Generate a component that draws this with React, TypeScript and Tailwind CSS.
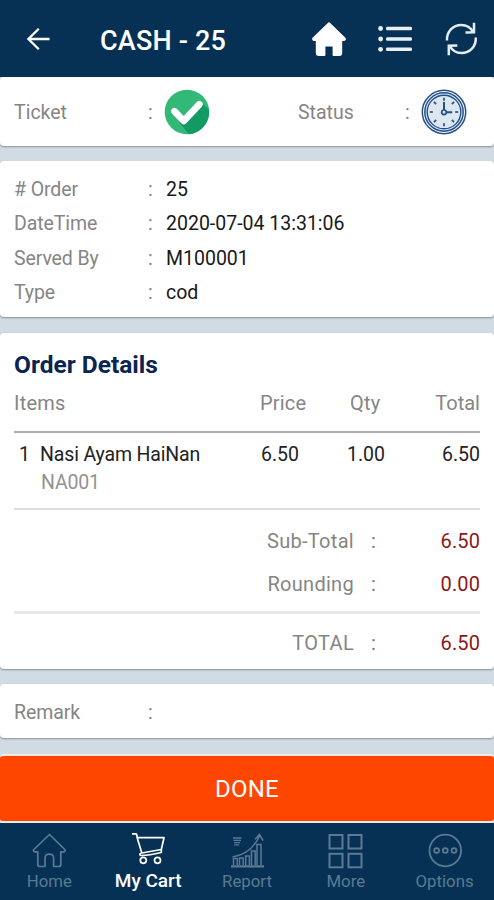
import { ReactNode } from "react";
import clsx from "clsx";

interface OrderField {
  label: string;
  value: string;
}

interface NavItem {
  label: string;
  icon: ReactNode;
  active?: boolean;
}

const fields: OrderField[] = [
  { label: "# Order", value: "25" },
  { label: "DateTime", value: "2020-07-04 13:31:06" },
  { label: "Served By", value: "M100001" },
  { label: "Type", value: "cod" },
];

const clockTicks = [0, 45, 90, 135, 180, 225, 270, 315];

function BackIcon() {
  return (
    <svg viewBox="0 0 24 24" className="h-6 w-6" fill="none" stroke="#fff" strokeWidth="2.3">
      <path d="M23.5 12H2.500M12.800 1.800 2.400 12l10.400 10.200" />
    </svg>
  );
}

function HomeSolidIcon() {
  return (
    <svg viewBox="0 0 34 34" className="h-[34px] w-[34px]" fill="#fff" stroke="#fff" strokeLinejoin="round" strokeWidth="2">
      <path d="M17 1.2 1.3 16.4c-.4.8 0 1.5.8 1.5h2.700V31c0 1.300.6 2 2 2h5.600v-8.200c0-1 .4-1.400 1.400-1.400h6.400c1 0 1.400.4 1.400 1.400V33h5.600c1.400 0 2-.7 2-2V17.900h2.700c.8 0 1.200-.7.8-1.500Z" />
    </svg>
  );
}

function ListIcon() {
  return (
    <svg viewBox="0 0 34 28" className="h-7 w-[34px]" fill="#e9f0f5">
      {[3.5, 14, 24.3].map((y) => (
        <g key={y}>
          <circle cx="2.600" cy={y} r="2.400" />
          <rect x="8" y={y - 1.8} width="26" height="3.600" rx="1.400" />
        </g>
      ))}
    </svg>
  );
}

function RefreshIcon() {
  return (
    <svg viewBox="0 0 34 36" className="h-9 w-[34px]" fill="none" stroke="#e4edf3" strokeWidth="2.500">
      <path d="M3 19.500C2.500 10.500 9 4 17.300 4c4.800 0 9.300 2.500 11.700 7M30 1.800v9.500l-8.500.3" />
      <path d="M31.800 16.500C32.300 25.500 25.800 32 17.500 32c-4.800 0-9.300-2.500-11.700-7M4.800 34.200v-9.500l8.500-.3" />
    </svg>
  );
}

function CheckIcon() {
  return (
    <svg viewBox="0 0 46 46" className="h-[46px] w-[46px]">
      <circle cx="23" cy="23" r="22.300" fill="#32b877" />
      <path d="M15 33.500 20 35 37 13l8 8A22.300 22.300 0 0 1 25 45.200Z" fill="#119b62" />
      <path d="m10.500 22.300 9.300 9.500 15.500-16.500" fill="none" stroke="#fff" strokeWidth="6.800" strokeLinecap="round" strokeLinejoin="round" />
    </svg>
  );
}

function ClockIcon() {
  return (
    <svg viewBox="0 0 46 46" className="h-[46px] w-[46px]" fill="none" stroke="#24508c">
      <circle cx="23" cy="23" r="21.700" fill="#fff" strokeWidth="1.500" />
      <circle cx="23" cy="23" r="19.200" fill="#dbe5f0" strokeWidth="1.500" />
      <circle cx="23" cy="23" r="16.800" fill="#dde7ef" strokeWidth="1.400" />
      {clockTicks.map((angle) => (
        <path key={angle} d="M23 8.800v3" strokeWidth="1.700" transform={`rotate(${angle} 23 23)`} />
      ))}
      <path d="M23 13v8M25.200 23.300h6" strokeWidth="2" />
      <circle cx="23" cy="23.300" r="2.300" strokeWidth="1.700" />
    </svg>
  );
}

function HomeIcon() {
  return (
    <svg viewBox="0 0 36 36" className="h-9 w-9" fill="none" stroke="currentColor" strokeWidth="1.700" strokeLinejoin="round">
      <path d="M18.500 1.500 2.800 16.500c-.8 1-.2 2.300 1 2.300h3V31.500c0 1.300.7 2 2 2h5.200v-8.300c0-3.200 1-4 4.300-4s4.300.8 4.300 4v8.300h5.200c1.300 0 2-.7 2-2V18.800h3c1.200 0 1.800-1.300 1-2.300Z" />
    </svg>
  );
}

function CartIcon() {
  return (
    <svg viewBox="0 0 36 36" className="h-9 w-9" fill="none" stroke="currentColor" strokeWidth="1.700" strokeLinejoin="round">
      <path d="M2 .9h4.300l1.400 3.800h26.300L31.300 16.500 11.800 20 6.800 3.500M11.800 20c-3 .7-2.300 2.500 0 2.500C18 22.500 25 21 31.300 19.500v-3" />
      <circle cx="13.300" cy="27.300" r="3" />
      <circle cx="27.500" cy="27.300" r="3" />
    </svg>
  );
}

function ReportIcon() {
  return (
    <svg viewBox="0 0 34 36" className="h-9 w-[34px]" fill="none" stroke="currentColor" strokeWidth="1.500">
      <path d="M3.500 32V25.500h3.700V32M9.500 32v-7h3.700V32M15.700 32v-9h3.700v9M21.500 32V18h3.700v14M27 32V11.500h4V32" />
      <path d="M1 33.300h33" strokeWidth="2.200" />
      <path d="M2.500 24C15 22 24 15 29.500 3M25 6.300l4.500-4.800 3.500 6" strokeWidth="1.500" />
      <path d="M3 5h8.300M3.500 7.300h7.500M4 9.600h6M4 11.800h5" strokeWidth="1.300" />
    </svg>
  );
}

function MoreIcon() {
  return (
    <svg viewBox="0 0 35 35" className="h-[35px] w-[35px]" fill="none" stroke="currentColor" strokeWidth="2">
      <rect x="1.500" y="1" width="13" height="13.500" />
      <rect x="20.500" y="1" width="13" height="13.500" />
      <rect x="1.500" y="19.800" width="13" height="13.500" />
      <rect x="20.500" y="19.800" width="13" height="13.500" />
    </svg>
  );
}

function OptionsIcon() {
  return (
    <svg viewBox="0 0 36 36" className="h-9 w-9" fill="none" stroke="currentColor" strokeWidth="1.800">
      <circle cx="18.300" cy="17.500" r="15.800" />
      <circle cx="9.600" cy="17.500" r="2.400" />
      <circle cx="18.300" cy="17.500" r="2.400" />
      <circle cx="27" cy="17.500" r="2.400" />
    </svg>
  );
}

const navItems: NavItem[] = [
  { label: "Home", icon: <HomeIcon /> },
  { label: "My Cart", icon: <CartIcon />, active: true },
  { label: "Report", icon: <ReportIcon /> },
  { label: "More", icon: <MoreIcon /> },
  { label: "Options", icon: <OptionsIcon /> },
];

function Card({ className, children }: { className?: string; children: ReactNode }) {
  return (
    <section className={clsx("rounded-[4px] bg-white px-[14px] shadow-[0_1px_2px_rgba(0,0,0,0.35)]", className)}>
      {children}
    </section>
  );
}

function SummaryRow({ label, value, className }: { label: string; value: string; className?: string }) {
  return (
    <div className={clsx("flex items-center text-[20px] leading-[24px]", className)}>
      <span className="w-[340px] text-right tracking-[0.3px] text-[#858585]">{label}</span>
      <span className="ml-[17px] text-[#777]">:</span>
      <span className="flex-1 text-right tracking-[0.100px] text-[#8f1518]">{value}</span>
    </div>
  );
}

export default function App() {
  return (
    <div className="flex h-[900px] w-[494px] flex-col bg-[#d1dbe4] font-[Roboto,sans-serif] text-[19.500px] leading-[24px] text-[#858585]">
      {/* Header */}
      <header className="flex h-[77px] shrink-0 items-center bg-[#063154] pl-[26px] pr-4">
        <BackIcon />
        <h1 className="ml-[50px] mt-1 text-[27px] font-medium tracking-[0.200px] text-white">CASH - 25</h1>
        <div className="ml-auto flex items-center">
          <HomeSolidIcon />
          <span className="ml-8">
            <ListIcon />
          </span>
          <span className="ml-8">
            <RefreshIcon />
          </span>
        </div>
      </header>

      <main className="flex flex-1 flex-col">
        {/* Ticket and status */}
        <Card className="flex h-[69px] items-center">
          <span className="mt-0.5 w-[134px]">Ticket</span>
          <span className="mt-0.5 w-4">:</span>
          <CheckIcon />
          <span className="ml-[88px] mt-0.5 w-[107px]">Status</span>
          <span className="mt-0.5 w-4">:</span>
          <ClockIcon />
        </Card>

        {/* Order information */}
        <Card className="mt-[15px] h-[156px] pt-3">
          {fields.map((field) => (
            <div key={field.label} className="flex h-[34.300px] items-center">
              <span className="w-[134px] tracking-[-0.100px]">{field.label}</span>
              <span className="w-[18px]">:</span>
              <span className="text-[#181818]">{field.value}</span>
            </div>
          ))}
        </Card>

        {/* Order details */}
        <Card className="mt-4 h-[336px] pt-[18px]">
          <h2 className="text-[24.500px] font-bold leading-[28px] text-[#0b2452]">Order Details</h2>
          <div className="mt-3 flex border-b-2 border-[#adadad] pb-4 text-[20px]">
            <span className="flex-1 tracking-[0.200px]">Items</span>
            <span className="w-[70px] tracking-[0.200px]">Price</span>
            <span className="w-[70px] pl-[20px] tracking-[0.200px]">Qty</span>
            <span className="w-[80px] text-right">Total</span>
          </div>
          <div className="flex border-b-2 border-[#ddd] pb-[13px] pt-[10px] text-[#222]">
            <span className="w-[26px] pl-[5px]">1</span>
            <div className="flex-1">
              <p className="tracking-[-0.150px]">Nasi Ayam HaiNan</p>
              <p className="mt-1 pl-[1px] tracking-[-0.200px] text-[#929292]">NA001</p>
            </div>
            <span className="w-[69px]">6.50</span>
            <span className="w-[70px] pl-[17px]">1.00</span>
            <span className="w-[80px] text-right">6.50</span>
          </div>
          <div className="border-b-[3px] border-[#e7e7e7] pb-[15px] pt-[19px]">
            <SummaryRow label="Sub-Total" value="6.50" />
            <SummaryRow label="Rounding" value="0.00" className="mt-[19px]" />
          </div>
          <SummaryRow label="TOTAL" value="6.50" className="mt-[17px]" />
        </Card>

        {/* Remark */}
        <Card className="mt-[15px] flex h-[54px] items-center pt-1">
          <span className="w-[134px] tracking-[-0.100px]">Remark</span>
          <span>:</span>
        </Card>

        <button className="mt-4 h-[69px] w-full rounded-[4px] border-y-2 border-[#f5e9e6] bg-[#ff4600] text-[24px] tracking-[0.200px] text-white">
          DONE
        </button>
      </main>

      {/* Bottom navigation */}
      <nav className="flex h-[77px] shrink-0 bg-[#063154]">
        {navItems.map((item) => (
          <a
            key={item.label}
            className={clsx(
              "flex flex-1 flex-col items-center pt-[10px]",
              item.active ? "text-white" : "text-[#5c7a92]"
            )}
          >
            <span className="flex h-9 items-center">{item.icon}</span>
            <span className={clsx("leading-[24px]", item.active ? "text-[19px] font-medium" : "text-[16.800px]")}>
              {item.label}
            </span>
          </a>
        ))}
      </nav>
    </div>
  );
}
